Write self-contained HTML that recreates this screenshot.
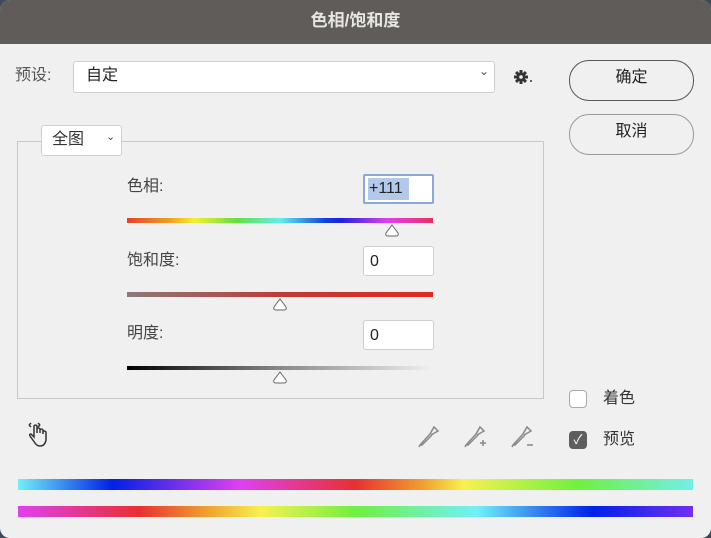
<!DOCTYPE html>
<html><head><meta charset="utf-8"><style>
*{margin:0;padding:0;box-sizing:border-box}
body{width:711px;height:538px;background:#3a4a5a;font-family:"Liberation Sans","Noto Sans CJK SC",sans-serif;position:relative;overflow:hidden}
.win{position:absolute;left:0;top:0;width:711px;height:538px;background:#f0f0f0;border-radius:10px;overflow:hidden}
.title{height:44px;background:#5f5c59;color:#e8e6e3;text-align:center;font-size:17px;line-height:42px;font-weight:bold}
.a{position:absolute}
.t{font-size:16px;color:#333;line-height:20px}
.box{background:#fff;border:1px solid #cfcfcf;border-radius:3px}
.btn{border:1.5px solid #555;border-radius:20px;background:#f0f0f0;text-align:center;font-size:16px;line-height:34px;color:#222}
.thumb{position:absolute;width:16px;height:13px}
</style></head><body><div class="win">
<div class="title">色相/饱和度</div>
<div class="a t" style="left:15px;top:66px;color:#555">预设:</div>
<div class="a box" style="left:73px;top:61px;width:422px;height:32px"></div>
<div class="a t" style="left:86px;top:66px;color:#222">自定</div>
<div class="a" style="left:479px;top:64px;font-size:12px;color:#555">⌄</div>
<svg class="a" style="left:514px;top:69px" width="20" height="16" viewBox="0 0 20 16"><g fill="#333"><circle cx="7" cy="8" r="4.5"/><rect x="5.5" y="1" width="3" height="14"/><rect x="0" y="6.5" width="14" height="3"/><rect x="5.5" y="1" width="3" height="14" transform="rotate(45 7 8)"/><rect x="5.5" y="1" width="3" height="14" transform="rotate(-45 7 8)"/><circle cx="17" cy="12" r="1"/></g><circle cx="7" cy="8" r="1.8" fill="#f0f0f0"/></svg>
<div class="a btn" style="left:569px;top:60px;width:125px;height:41px">确定</div>
<div class="a btn" style="left:569px;top:114px;width:125px;height:41px;border-color:#999">取消</div>
<div class="a" style="left:17px;top:141px;width:527px;height:258px;border:1px solid #c8c8c8"></div>
<div class="a box" style="left:41px;top:125px;width:81px;height:31px"></div>
<div class="a t" style="left:52px;top:130px">全图</div>
<div class="a" style="left:106px;top:130px;font-size:11px;color:#444">⌄</div>
<div class="a t" style="left:127px;top:177px;color:#444">色相:</div>
<div class="a" style="left:363px;top:174px;width:71px;height:30px;background:#fff;border:2px solid #8aa8d8;border-radius:2px"></div>
<div class="a" style="left:368px;top:178px;width:41px;height:22px;background:#b3c9ea"></div>
<div class="a t" style="left:369px;top:179px;color:#222">+111</div>
<div class="a" style="left:127px;top:218px;width:306px;height:5px;background:linear-gradient(90deg,#e8402a,#f0a020 14%,#f4f030 22%,#60e040 36%,#60f0f0 50%,#1040e0 65%,#2020e0 70%,#e040f0 85%,#e83060)"></div>
<svg class="thumb" style="left:384px;top:224px" viewBox="0 0 16 13"><path d="M8 1 L14 9 Q15 12 12 12 L4 12 Q1 12 2 9 Z" fill="#fff" stroke="#666"/></svg>
<div class="a t" style="left:127px;top:251px;color:#444">饱和度:</div>
<div class="a box" style="left:363px;top:246px;width:71px;height:30px"></div>
<div class="a t" style="left:370px;top:252px;color:#222">0</div>
<div class="a" style="left:127px;top:292px;width:306px;height:5px;background:linear-gradient(90deg,#8a7a7a,#c03a38 50%,#e02a20)"></div>
<svg class="thumb" style="left:272px;top:298px" viewBox="0 0 16 13"><path d="M8 1 L14 9 Q15 12 12 12 L4 12 Q1 12 2 9 Z" fill="#fff" stroke="#666"/></svg>
<div class="a t" style="left:127px;top:324px;color:#444">明度:</div>
<div class="a box" style="left:363px;top:320px;width:71px;height:30px"></div>
<div class="a t" style="left:370px;top:326px;color:#222">0</div>
<div class="a" style="left:127px;top:366px;width:306px;height:4px;background:linear-gradient(90deg,#000,#888 50%,#f0f0f0)"></div>
<svg class="thumb" style="left:272px;top:371px" viewBox="0 0 16 13"><path d="M8 1 L14 9 Q15 12 12 12 L4 12 Q1 12 2 9 Z" fill="#fff" stroke="#666"/></svg>
<svg class="a" style="left:26px;top:421px" width="26" height="28" viewBox="0 0 26 28" fill="none" stroke="#333" stroke-width="1.5"><path d="M9 22 L4 15 Q3 13 5 13 L8 16 L8 5 Q9.5 3 11 5 L11 12 L11 8 Q12.5 6 14 8 L14 12 L14 9 Q15.5 7 17 9 L17 13 L17 11 Q18.5 9 20 11 L20 19 Q19 25 14 25 Q11 25 9 22Z"/><path d="M3 4 L5 2 M3 4 L5 6 M14 4 L12 2 M14 4 L12 6" /></svg>
<svg class="a" style="left:416px;top:423px" width="26" height="26" viewBox="0 0 26 26" fill="none" stroke="#888" stroke-width="1.5"><path d="M4 22 L14 11 M14 11 L18 4 L22 8 L15 12 M4 22 L3 24 M4 22 L6 22 L16 12"/></svg>
<svg class="a" style="left:462px;top:423px" width="26" height="26" viewBox="0 0 26 26" fill="none" stroke="#888" stroke-width="1.5"><path d="M4 22 L14 11 M14 11 L18 4 L22 8 L15 12 M4 22 L3 24 M4 22 L6 22 L16 12 M18 20 L24 20 M21 17 L21 23"/></svg>
<svg class="a" style="left:509px;top:423px" width="26" height="26" viewBox="0 0 26 26" fill="none" stroke="#888" stroke-width="1.5"><path d="M4 22 L14 11 M14 11 L18 4 L22 8 L15 12 M4 22 L3 24 M4 22 L6 22 L16 12 M18 22 L24 22"/></svg>
<div class="a" style="left:569px;top:390px;width:18px;height:18px;border:1px solid #aaa;border-radius:4px;background:#fff"></div>
<div class="a t" style="left:603px;top:389px">着色</div>
<div class="a" style="left:569px;top:431px;width:18px;height:18px;border-radius:4px;background:#5e5e5e;color:#fff;font-size:13px;text-align:center;line-height:18px">✓</div>
<div class="a t" style="left:603px;top:430px">预览</div>
<div class="a" style="left:18px;top:479px;width:675px;height:11px;background:linear-gradient(90deg,#70f0f8,#0020e8 14%,#e040f0 33%,#e83030 50%,#f0a030 60%,#f8f050 66%,#70f040 83%,#70f0e8)"></div>
<div class="a" style="left:18px;top:506px;width:675px;height:11px;background:linear-gradient(90deg,#e040f0,#e83030 18%,#f0a030 28%,#f8f050 36%,#70f040 50%,#70f0f8 68%,#0020e8 85%,#7030f0)"></div>
</div></body></html>
